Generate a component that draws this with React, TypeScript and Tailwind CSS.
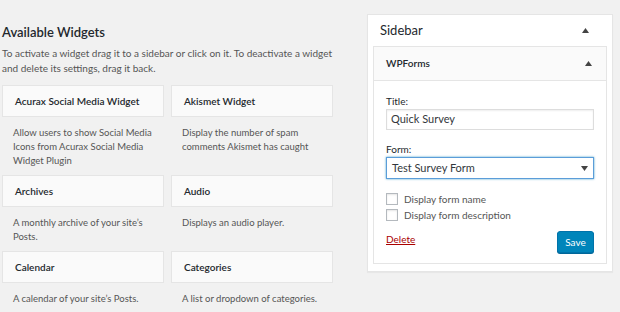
import React from 'react';

interface Widget {
  title: string;
  lines: string[];
}

const widgets: Widget[] = [
  { title: 'Acurax Social Media Widget', lines: ['Allow users to show Social Media', 'Icons from Acurax Social Media', 'Widget Plugin'] },
  { title: 'Akismet Widget', lines: ['Display the number of spam', 'comments Akismet has caught'] },
  { title: 'Archives', lines: ["A monthly archive of your site\u2019s", 'Posts.'] },
  { title: 'Audio', lines: ['Displays an audio player.'] },
  { title: 'Calendar', lines: ["A calendar of your site\u2019s Posts."] },
  { title: 'Categories', lines: ['A list or dropdown of categories.'] },
];

const Caret = ({ down = false }: { down?: boolean }) => (
  <svg width="7" height="5" viewBox="0 0 7 5" className="fill-[#444]">
    {down ? <path d="M0 0h7L3.5 5z" /> : <path d="M0 5h7L3.5 0z" />}
  </svg>
);

const Checkbox = ({ label }: { label: string }) => (
  <div className="flex items-center gap-[6px] h-[12px]">
    <span className="w-[12px] h-[12px] border border-[#b4b9be] bg-white shadow-[inset_0_1px_2px_rgba(0,0,0,0.1)]" />
    <span className="leading-[14px]">{label}</span>
  </div>
);

const App: React.FC = () => {
  return (
    <div
      className="w-[620px] h-[312px] bg-[#f1f1f1] flex overflow-hidden text-[#23282d]"
      style={{ fontFamily: 'Lato, "Noto Sans", sans-serif' }}
    >
      <div className="w-[331px] ml-[2px] pt-[22px] shrink-0">
        <h2 className="text-[13px] font-semibold leading-[20px]">Available Widgets</h2>
        <p className="mt-[4px] text-[10px] leading-[14.5px] text-[#555]">
          To activate a widget drag it to a sidebar or click on it. To deactivate a widget and delete its settings, drag it back.
        </p>
        <div className="mt-[10px] grid grid-cols-2 gap-x-[7px]">
          {widgets.map(w => (
            <div key={w.title}>
              <div className="h-[32px] bg-[#fafafa] border border-[#e5e5e5] flex items-center px-[12px] text-[10px] font-semibold whitespace-nowrap">
                {w.title}
              </div>
              <div className="pt-[9px] pb-[7px] px-[11px] text-[9.5px] leading-[14px] text-[#555] whitespace-nowrap">
                {w.lines.map(l => (
                  <div key={l}>{l}</div>
                ))}
              </div>
            </div>
          ))}
        </div>
      </div>

      <div className="ml-[34px] mt-[14px] w-[246px] h-[258px] bg-white border border-[#e5e5e5] shadow-[0_1px_1px_rgba(0,0,0,0.04)] px-[5px] pb-[7px] flex flex-col">
        <div className="h-[36px] flex items-center justify-between pl-[7px] pr-[18px]">
          <span className="text-[13px]">Sidebar</span>
          <Caret />
        </div>
        <div className="border border-[#e5e5e5] flex flex-col">
          <div className="h-[34px] bg-[#fafafa] border-b border-[#e5e5e5] flex items-center justify-between pl-[12px] pr-[14px]">
            <span className="text-[10px] font-semibold">WPForms</span>
            <Caret />
          </div>
          <div className="px-[12px] pt-[14px] pb-[10px] text-[10px]">
            <label className="block leading-[13px]">Title:</label>
            <div className="mt-[1px] h-[21px] border border-[#ddd] shadow-[inset_0_1px_2px_rgba(0,0,0,0.07)] flex items-center px-[4px] text-[11px] text-[#32373c]">
              Quick Survey
            </div>
            <label className="block leading-[13px] mt-[13px]">Form:</label>
            <div className="mt-[1px] h-[22px] border border-[#5b9dd9] shadow-[0_0_2px_rgba(30,140,190,0.8)] flex items-center justify-between pl-[5px] pr-[5px] text-[11px] text-[#32373c]">
              <span>Test Survey Form</span>
              <Caret down />
            </div>
            <div className="mt-[14px] flex flex-col gap-[4px] text-[#555]">
              <Checkbox label="Display form name" />
              <Checkbox label="Display form description" />
            </div>
            <div className="mt-[10px] flex items-start justify-between">
              <a className="mt-[1px] text-[#a00] underline">Delete</a>
              <button className="h-[22px] w-[37px] bg-[#0085ba] border border-[#0073aa] rounded-[3px] text-white text-[10px] leading-none shadow-[0_1px_0_#006799]">
                Save
              </button>
            </div>
          </div>
        </div>
      </div>
    </div>
  );
};

export default App;
